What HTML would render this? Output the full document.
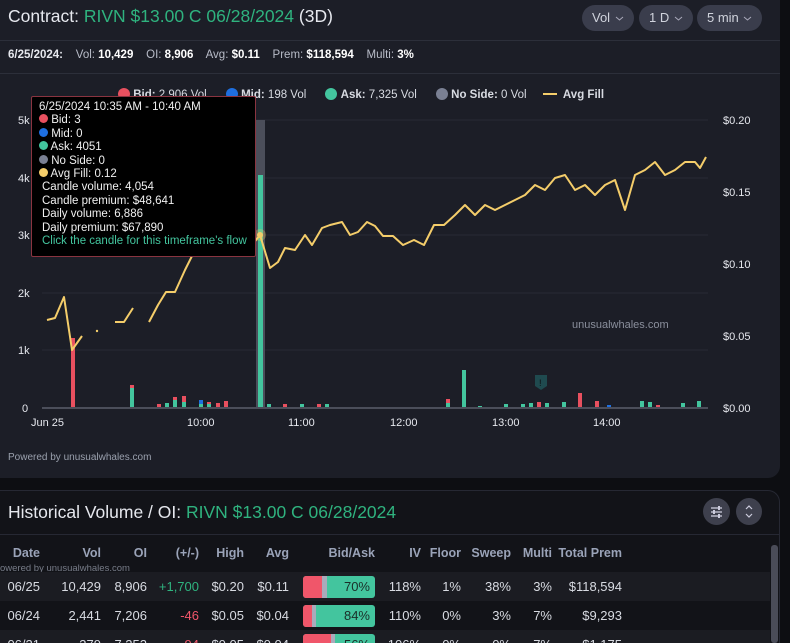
<!DOCTYPE html>
<html><head><meta charset="utf-8"><style>
*{margin:0;padding:0;box-sizing:border-box}
html,body{width:790px;height:643px;overflow:hidden}
body{background:#0d0e12;font-family:"Liberation Sans",sans-serif;color:#e6e8ee;position:relative}
.card1{position:absolute;left:0;top:0;width:780px;height:478px;background:#1c1e27;border-radius:0 0 12px 0}
.t{position:absolute;white-space:nowrap}
.g{color:#2fb37f}
.pill{position:absolute;top:5px;height:26px;background:#3a3d4c;border-radius:13px;color:#d0d3dc;font-size:13px;line-height:26px;padding-left:10px}
.pill svg{position:absolute;right:10px;top:11px}
.line{position:absolute;left:0;width:780px;height:1px;background:#2c2f3a}
.card2{position:absolute;left:0;top:490px;width:780px;height:160px;background:#121318;border-radius:0 12px 0 0;border-top:1px solid #262833;border-right:1px solid #262833}
table{position:absolute;left:0;top:544px;border-collapse:collapse;font-size:13px;width:770px}
td{height:29px;text-align:right;color:#d8dbe2}
.hd td{font-weight:bold;color:#9aa3b8;height:18px;font-size:12.5px}
.r1{background:#1b1c22}
.bar{display:inline-block;width:72px;height:22px;border-radius:3px;position:relative;vertical-align:middle;background:#43c59e;overflow:hidden;color:#1a2e28;text-align:right;padding-right:5px;line-height:22px;font-size:13px}
.btn{position:absolute;top:498px;width:27px;height:27px;border-radius:50%;background:#3e404d}
.d{display:inline-block;width:12px;height:12px;border-radius:50%;vertical-align:-2px}
.tt div{white-space:nowrap}
</style></head><body>
<div class="card1"></div>
<div class="t" style="left:8px;top:6px;font-size:17.5px">Contract: <span class="g">RIVN $13.00 C 06/28/2024</span> (3D)</div>
<div class="pill" style="left:582px;width:52px">Vol <svg width="9" height="5"><path d="M1 1l3.5 3l3.5-3" fill="none" stroke="#aab" stroke-width="1"/></svg></div>
<div class="pill" style="left:639px;width:54px">1 D <svg width="9" height="5"><path d="M1 1l3.5 3l3.5-3" fill="none" stroke="#aab" stroke-width="1"/></svg></div>
<div class="pill" style="left:697px;width:65px">5 min <svg width="9" height="5"><path d="M1 1l3.5 3l3.5-3" fill="none" stroke="#aab" stroke-width="1"/></svg></div>
<div class="line" style="top:40px"></div>
<div class="t" style="left:8px;top:49px;font-size:11.5px;color:#b8bcc8"><b style="color:#e6e8ee">6/25/2024:</b>&nbsp;&nbsp;&nbsp; Vol: <b style="color:#fff">10,429</b>&nbsp;&nbsp;&nbsp; OI: <b style="color:#fff">8,906</b>&nbsp;&nbsp;&nbsp; Avg: <b style="color:#fff">$0.11</b>&nbsp;&nbsp;&nbsp; Prem: <b style="color:#fff">$118,594</b>&nbsp;&nbsp;&nbsp; Multi: <b style="color:#fff">3%</b></div>
<div class="line" style="top:73px"></div>
<div class="t" style="left:118px;top:88px;font-size:11.5px;color:#d8dbe2">
<span class="d" style="background:#e8505f"></span> <b>Bid:</b> 2,906 Vol&nbsp;&nbsp;&nbsp;&nbsp;&nbsp;
<span class="d" style="background:#1e6fe0"></span> <b>Mid:</b> 198 Vol&nbsp;&nbsp;&nbsp;&nbsp;&nbsp;
<span class="d" style="background:#43c59e"></span> <b>Ask:</b> 7,325 Vol&nbsp;&nbsp;&nbsp;&nbsp;&nbsp;
<span class="d" style="background:#7a8093"></span> <b>No Side:</b> 0 Vol&nbsp;&nbsp;&nbsp;&nbsp;
<span style="display:inline-block;width:14px;height:2px;background:#f4cd6a;vertical-align:3px"></span>&nbsp; <b>Avg Fill</b></div>
<svg style="position:absolute;left:0;top:0" width="790" height="480">
<g stroke="#272a34" stroke-width="1">
<line x1="42" y1="120" x2="708" y2="120"/><line x1="42" y1="178" x2="708" y2="178"/><line x1="42" y1="235" x2="708" y2="235"/><line x1="42" y1="293" x2="708" y2="293"/><line x1="42" y1="350" x2="708" y2="350"/></g>
<g font-size="11" fill="#e6e8ee" font-family="Liberation Sans">
<text x="18" y="124">5k</text><text x="18" y="182">4k</text><text x="18" y="239">3k</text><text x="18" y="297">2k</text><text x="18" y="354">1k</text><text x="22" y="412">0</text>
<text x="723" y="124">$0.20</text><text x="723" y="196">$0.15</text><text x="723" y="268">$0.10</text><text x="723" y="340">$0.05</text><text x="723" y="412">$0.00</text>
<text x="31" y="426">Jun 25</text><text x="187" y="426">10:00</text><text x="288" y="426">11:00</text><text x="390" y="426">12:00</text><text x="492" y="426">13:00</text><text x="593" y="426">14:00</text>
</g>
<text x="572" y="328" font-size="11" fill="#8a8f9c" font-family="Liberation Sans">unusualwhales.com</text>
<rect x="256" y="120" width="9" height="288" fill="#4b4e5a"/>
<rect x="258" y="175" width="5" height="233" fill="#43c59e"/>
<g>
<rect x="71" y="338" width="4" height="70" fill="#e8505f"/>
<rect x="130" y="388" width="4" height="20" fill="#43c59e"/><rect x="130" y="385" width="4" height="3" fill="#e8505f"/>
<rect x="157" y="404" width="4" height="4" fill="#e8505f"/><rect x="165" y="403" width="4" height="5" fill="#43c59e"/>
<rect x="173" y="400" width="4" height="8" fill="#43c59e"/><rect x="173" y="397" width="4" height="3" fill="#e8505f"/>
<rect x="182" y="402" width="4" height="6" fill="#43c59e"/><rect x="182" y="396" width="4" height="6" fill="#e8505f"/>
<rect x="199" y="404" width="4" height="4" fill="#43c59e"/><rect x="199" y="400" width="4" height="4" fill="#1e6fe0"/>
<rect x="207" y="404" width="4" height="4" fill="#43c59e"/><rect x="207" y="402" width="4" height="2" fill="#e8505f"/>
<rect x="216" y="403" width="4" height="5" fill="#e8505f"/><rect x="224" y="401" width="4" height="7" fill="#e8505f"/>
<rect x="267" y="404" width="4" height="4" fill="#43c59e"/><rect x="283" y="404" width="4" height="4" fill="#e8505f"/>
<rect x="300" y="404" width="4" height="4" fill="#43c59e"/><rect x="317" y="404" width="4" height="4" fill="#e8505f"/>
<rect x="325" y="404" width="4" height="4" fill="#43c59e"/>
<rect x="446" y="403" width="4" height="5" fill="#43c59e"/><rect x="446" y="399" width="4" height="4" fill="#e8505f"/>
<rect x="462" y="370" width="4" height="38" fill="#43c59e"/>
<rect x="478" y="406" width="4" height="2" fill="#43c59e"/>
<rect x="504" y="404" width="4" height="4" fill="#43c59e"/><rect x="521" y="404" width="4" height="4" fill="#43c59e"/>
<rect x="529" y="403" width="4" height="5" fill="#43c59e"/><rect x="537" y="402" width="4" height="6" fill="#e8505f"/>
<rect x="545" y="403" width="4" height="5" fill="#43c59e"/><rect x="562" y="402" width="4" height="6" fill="#43c59e"/>
<rect x="578" y="393" width="4" height="15" fill="#e8505f"/><rect x="595" y="401" width="4" height="7" fill="#e8505f"/>
<rect x="640" y="401" width="4" height="7" fill="#43c59e"/><rect x="648" y="402" width="4" height="6" fill="#43c59e"/>
<rect x="681" y="403" width="4" height="5" fill="#43c59e"/><rect x="697" y="401" width="4" height="7" fill="#43c59e"/>
<rect x="607" y="405" width="4" height="3" fill="#1e6fe0"/><rect x="656" y="405" width="4" height="3" fill="#e8505f"/>
</g>
<path d="M535 375h12v11l-6 4l-6-4z" fill="#1f4a4f"/><text x="539" y="386" font-size="9" fill="#0d0e12">!</text>
<line x1="42" y1="408" x2="708" y2="408" stroke="#4b4e5a" stroke-width="2"/>
<g fill="none" stroke="#f4cd6a" stroke-width="2" stroke-linejoin="round">
<path d="M47 320L55 318L64 297L72 350L82 336"/>
<path d="M115 322L124 322L133 308"/>
<path d="M149 322L158 305L166 292L175 292L185 270L195 250L205 230L215 215L225 225L235 235L245 230L252 245L260 235L270 268L278 262L285 248L295 250L305 235L312 245L322 228L330 225L342 222L350 235L358 232L367 222L375 226L383 236L393 236L403 245L414 240L424 245L434 225L444 225L455 215L465 205L475 215L485 205L495 210L505 205L515 200L525 195L535 185L545 190L555 178L565 175L575 190L585 185L595 195L605 185L615 180L625 210L635 175L645 170L655 162L665 175L675 170L685 162L695 162L700 168L706 157"/>
</g>
<circle cx="97" cy="331" r="1.2" fill="#f4cd6a"/>
<circle cx="260" cy="235" r="6" fill="#f4cd6a" opacity=".3"/><circle cx="260" cy="235" r="3" fill="#f4cd6a"/>
<text x="8" y="460" font-size="10" fill="#9aa0ad" font-family="Liberation Sans">Powered by unusualwhales.com</text>
</svg>
<div class="tt" style="position:absolute;left:31px;top:96px;width:225px;height:161px;background:#000;border:1px solid #8a3440;border-radius:2px;font-size:11.5px;line-height:13.4px;padding:4px 0 0 7px;color:#f0f0f0">
<div>6/25/2024 10:35 AM - 10:40 AM</div>
<div><span style="display:inline-block;width:9px;height:9px;border-radius:50%;background:#e8505f"></span> Bid: 3</div>
<div><span style="display:inline-block;width:9px;height:9px;border-radius:50%;background:#1e6fe0"></span> Mid: 0</div>
<div><span style="display:inline-block;width:9px;height:9px;border-radius:50%;background:#43c59e"></span> Ask: 4051</div>
<div><span style="display:inline-block;width:9px;height:9px;border-radius:50%;background:#7a8093"></span> No Side: 0</div>
<div><span style="display:inline-block;width:9px;height:9px;border-radius:50%;background:#f4cd6a"></span> Avg Fill: 0.12</div>
<div style="padding-left:3px">Candle volume: 4,054</div>
<div style="padding-left:3px">Candle premium: $48,641</div>
<div style="padding-left:3px">Daily volume: 6,886</div>
<div style="padding-left:3px">Daily premium: $67,890</div>
<div style="padding-left:3px;color:#43c59e">Click the candle for this timeframe's flow</div>
</div>
<div class="card2"></div>
<div class="t" style="left:8px;top:502px;font-size:17.5px">Historical Volume / OI: <span class="g">RIVN $13.00 C 06/28/2024</span></div>
<div class="btn" style="left:703px"><svg width="27" height="27"><g stroke="#ccd" stroke-width="1.3"><line x1="8" y1="10" x2="19" y2="10"/><line x1="8" y1="14" x2="19" y2="14"/><line x1="8" y1="18" x2="19" y2="18"/></g><g fill="#ccd"><rect x="15" y="8" width="2" height="4"/><rect x="10" y="12" width="2" height="4"/><rect x="15" y="16" width="2" height="4"/></g></svg></div>
<div class="btn" style="left:736px;width:26px"><svg width="26" height="27"><path d="M10 11l3-3l3 3M10 16l3 3l3-3" fill="none" stroke="#ccd" stroke-width="1.2"/></svg></div>
<div class="line" style="top:534px;background:#262833"></div>
<div style="position:absolute;left:771px;top:545px;width:7px;height:98px;background:#4a4c58;border-radius:3px"></div>
<div class="t" style="left:0;top:563px;font-size:9.5px;color:#777c88">owered by unusualwhales.com</div>
<table>
<tr class="hd"><td style="width:40px">Date</td><td style="width:61px">Vol</td><td style="width:46px">OI</td><td style="width:52px">(+/-)</td><td style="width:45px">High</td><td style="width:45px">Avg</td><td style="width:86px">Bid/Ask</td><td style="width:46px">IV</td><td style="width:40px">Floor</td><td style="width:50px">Sweep</td><td style="width:41px">Multi</td><td style="width:70px">Total Prem</td><td></td></tr>
<tr><td colspan="13" style="height:10px"></td></tr>
<tr class="r1"><td>06/25</td><td>10,429</td><td>8,906</td><td style="color:#2fb37f">+1,700</td><td>$0.20</td><td>$0.11</td><td><span class="bar"><span style="position:absolute;left:0;top:0;width:19px;height:22px;background:#f0566a"></span><span style="position:absolute;left:19px;top:0;width:5px;height:22px;background:#aab"></span>70%</span></td><td>118%</td><td>1%</td><td>38%</td><td>3%</td><td>$118,594</td><td></td></tr>
<tr><td>06/24</td><td>2,441</td><td>7,206</td><td style="color:#f0566a">-46</td><td>$0.05</td><td>$0.04</td><td><span class="bar"><span style="position:absolute;left:0;top:0;width:9px;height:22px;background:#f0566a"></span><span style="position:absolute;left:9px;top:0;width:4px;height:22px;background:#aab"></span>84%</span></td><td>110%</td><td>0%</td><td>3%</td><td>7%</td><td>$9,293</td><td></td></tr>
<tr class="r1"><td>06/21</td><td>379</td><td>7,252</td><td style="color:#f0566a">-94</td><td>$0.05</td><td>$0.04</td><td><span class="bar"><span style="position:absolute;left:0;top:0;width:28px;height:22px;background:#f0566a"></span><span style="position:absolute;left:28px;top:0;width:4px;height:22px;background:#aab"></span>56%</span></td><td>106%</td><td>0%</td><td>0%</td><td>7%</td><td>$1,175</td><td></td></tr>
</table>
</body></html>
